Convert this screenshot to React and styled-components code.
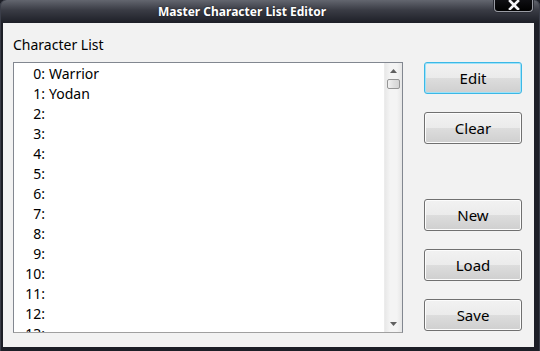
import React from 'react';
import styled, { createGlobalStyle } from 'styled-components';

const characters = ['Warrior', 'Yodan'];
const rows = Array.from({ length: 14 }, (_, i) => ({ id: i, name: characters[i] || '' }));

const App = () => {
  return (
    <>
      <GlobalStyle />
      <StyledWindow>
        <StyledTitleBar>
          <StyledTitle>Master Character List Editor</StyledTitle>
          <StyledCloseButton>
            <svg width="14" height="10" viewBox="0 0 14 10">
              <path d="M3 1 L11 9 M11 1 L3 9" stroke="#f4f4f8" strokeWidth="2.6" strokeLinecap="square" />
            </svg>
          </StyledCloseButton>
        </StyledTitleBar>
        <StyledClient>
          <StyledLabel>Character List</StyledLabel>
          <StyledListBox>
            <StyledItems>
              {rows.map((row) => (
                <StyledRow key={row.id}>
                  <StyledIndex>{row.id}:</StyledIndex>
                  <StyledName>{row.name}</StyledName>
                </StyledRow>
              ))}
            </StyledItems>
            <StyledScrollBar>
              <StyledArrow>
                <svg width="7" height="4" viewBox="0 0 7 4">
                  <path d="M3.5 0 L7 4 L0 4 Z" fill="#606060" />
                </svg>
              </StyledArrow>
              <StyledThumb />
              <StyledTrack />
              <StyledArrow>
                <svg width="7" height="4" viewBox="0 0 7 4">
                  <path d="M0 0 L7 0 L3.5 4 Z" fill="#606060" />
                </svg>
              </StyledArrow>
            </StyledScrollBar>
          </StyledListBox>
          <StyledButtons>
            <StyledButton focused>Edit</StyledButton>
            <StyledButton>Clear</StyledButton>
            <StyledSpacer />
            <StyledButton>New</StyledButton>
            <StyledButton>Load</StyledButton>
            <StyledButton>Save</StyledButton>
          </StyledButtons>
        </StyledClient>
      </StyledWindow>
    </>
  );
};

const GlobalStyle = createGlobalStyle`
  html, body {
    margin: 0;
    padding: 0;
    background: #1d1f27;
  }
  body {
    font-family: "Noto Sans", "Open Sans", sans-serif;
  }
`;

const StyledWindow = styled.div`
  width: 540px;
  height: 351px;
  box-sizing: border-box;
  display: flex;
  flex-direction: column;
  padding: 0 6px 4px 3px;
  border-radius: 6px 6px 0 0;
  background: linear-gradient(to bottom, #63666f 0px, #3a3c45 10px, #1d1f27 23px, #1d1f27 100%);
  box-shadow: inset 1px 0 0 #3a3d48, inset -1px 0 0 #3a3d48;
  overflow: hidden;
`;

const StyledTitleBar = styled.div`
  height: 23px;
  display: flex;
  align-items: center;
  justify-content: center;
  padding-right: 53px;
  position: relative;
`;

const StyledTitle = styled.div`
  color: #ffffff;
  font-size: 12px;
  font-weight: bold;
  margin-top: -1px;
  text-shadow: 0 0 2px rgba(0, 0, 0, 0.6);
`;

const StyledCloseButton = styled.div`
  position: absolute;
  top: -1px;
  right: 1px;
  width: 39px;
  height: 13px;
  box-sizing: border-box;
  display: flex;
  align-items: center;
  justify-content: center;
  background: linear-gradient(to bottom, #101014, #000000);
  border: 1px solid #9a9ca4;
  border-top: none;
  border-radius: 0 0 4px 4px;
  box-shadow: 0 0 0 1px #2b2d35;
`;

const StyledClient = styled.div`
  flex: 1;
  background: #f2f2f2;
  display: grid;
  grid-template-columns: 390px 98px;
  grid-template-rows: 18px 271px;
  column-gap: 21px;
  row-gap: 8px;
  padding: 13px 0 0 10px;
  box-sizing: border-box;
`;

const StyledLabel = styled.div`
  grid-column: 1 / span 2;
  font-size: 14px;
  line-height: 18px;
  color: #000;
`;

const StyledListBox = styled.div`
  box-sizing: border-box;
  border: 1px solid #828790;
  border-bottom-color: #a0a0a0;
  background: #ffffff;
  display: flex;
  overflow: hidden;
`;

const StyledItems = styled.div`
  flex: 1;
  overflow: hidden;
`;

const StyledRow = styled.div`
  height: 20px;
  display: flex;
  align-items: center;
  font-size: 14px;
  color: #000;
`;

const StyledIndex = styled.span`
  width: 31px;
  text-align: right;
`;

const StyledName = styled.span`
  margin-left: 4px;
`;

const StyledScrollBar = styled.div`
  width: 17px;
  display: flex;
  flex-direction: column;
  align-items: center;
  background: linear-gradient(to right, #e8e8e8, #f4f4f4 30%, #f4f4f4 70%, #e6e6e6);
  border-left: 1px solid #ececec;
`;

const StyledArrow = styled.div`
  height: 16px;
  display: flex;
  align-items: center;
  justify-content: center;
`;

const StyledThumb = styled.div`
  width: 13px;
  height: 10px;
  box-sizing: border-box;
  border: 1px solid #959595;
  border-radius: 2px;
  background: linear-gradient(to right, #f2f2f2, #e0e0e0 50%, #d4d4d4);
`;

const StyledTrack = styled.div`
  flex: 1;
`;

const StyledButtons = styled.div`
  display: flex;
  flex-direction: column;
  gap: 18px;
`;

const StyledSpacer = styled.div`
  height: 19px;
`;

const StyledButton = styled.button`
  width: 98px;
  height: 32px;
  box-sizing: border-box;
  padding: 0;
  margin: 0;
  font-family: "Noto Sans", "Open Sans", sans-serif;
  font-size: 15px;
  color: #000;
  border-radius: 3px;
  border: 1px solid ${({ focused }) => (focused ? '#3cb8e6' : '#707070')};
  background: linear-gradient(to bottom, #f2f2f2 0%, #ebebeb 50%, #dddddd 50%, #cfcfcf 100%);
  box-shadow: inset 0 0 0 1px ${({ focused }) => (focused ? '#9fe2f8' : '#fcfcfc')};
`;

export default App;
